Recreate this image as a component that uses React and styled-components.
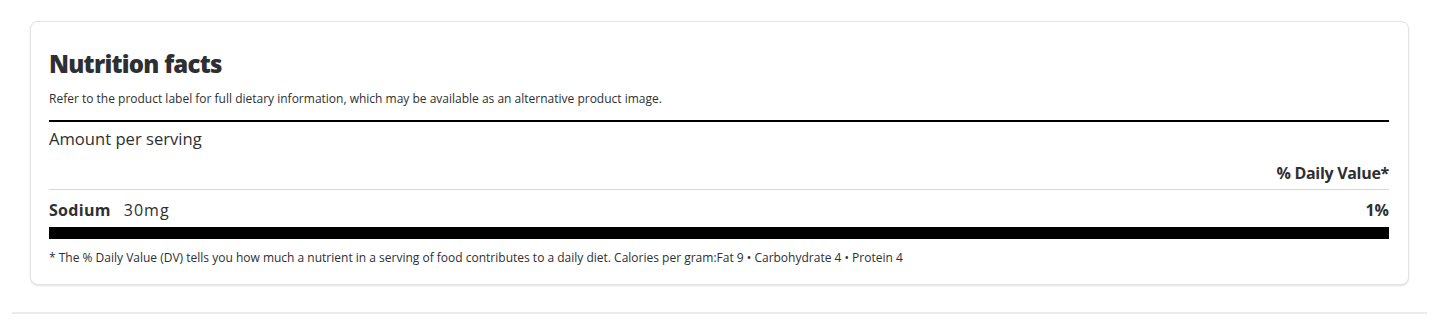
import React from "react";
import styled, { createGlobalStyle } from "styled-components";

const GlobalStyle = createGlobalStyle`
  body {
    margin: 0;
    background: #fff;
    font-family: "Open Sans", Lato, sans-serif;
    color: #2e2f32;
  }
`;

const Page = styled.div`
  padding: 21px 36px 0 30px;
`;

const Card = styled.section`
  border: 1px solid #e3e4e5;
  border-radius: 8px;
  box-shadow: 0 1px 2px rgba(0, 0, 0, 0.12);
  padding: 27px 19px 18px 18px;
  background: #fff;
`;

const Title = styled.h2`
  margin: 0;
  font-size: 24px;
  line-height: 30px;
  font-weight: 800;
  letter-spacing: -0.75px;
`;

const Note = styled.p`
  margin: ${(p) => p.$top || 0}px 0 0;
  font-size: 12px;
  line-height: 16px;
`;

const Rule = styled.div`
  height: ${(p) => p.$size}px;
  background: ${(p) => p.$color};
  margin-top: ${(p) => p.$top}px;
`;

const Amount = styled.div`
  font-size: 16.6px;
  line-height: 22px;
  margin-top: 6px;
`;

const Row = styled.div`
  display: flex;
  justify-content: ${(p) => (p.$end ? "flex-end" : "space-between")};
  align-items: baseline;
  font-size: 16px;
  line-height: 20px;
  margin-top: ${(p) => p.$top}px;
`;

const Strong = styled.span`
  font-weight: 700;
  letter-spacing: ${(p) => p.$tight || 0}px;
`;

const Nutrient = styled.div`
  display: flex;
  gap: 13px;
  align-items: baseline;
`;

const Quantity = styled.span`
  letter-spacing: 1px;
`;

const Divider = styled.hr`
  border: 0;
  height: 2px;
  background: #ebebeb;
  margin: 27px 18px 0 12px;
`;

export default function App() {
  return (
    <>
      <GlobalStyle />
      <Page>
        <Card>
          <Title>Nutrition facts</Title>
          <Note $top={12}>
            Refer to the product label for full dietary information, which may
            be available as an alternative product image.
          </Note>
          <Rule $size={2} $color="#000" $top={13} />
          <Amount>Amount per serving</Amount>
          <Row $end $top={13}>
            <Strong $tight={-0.3}>% Daily Value*</Strong>
          </Row>
          <Rule $size={1} $color="#d8d8d8" $top={6} />
          <Row $top={10}>
            <Nutrient>
              <Strong $tight={0.3}>Sodium</Strong>
              <Quantity>30mg</Quantity>
            </Nutrient>
            <Strong>1%</Strong>
          </Row>
          <Rule $size={12} $color="#000" $top={7} />
          <Note $top={11}>
            * The % Daily Value (DV) tells you how much a nutrient in a serving
            of food contributes to a daily diet. Calories per gram:Fat 9 •
            Carbohydrate 4 • Protein 4
          </Note>
        </Card>
      </Page>
      <Divider />
    </>
  );
}
